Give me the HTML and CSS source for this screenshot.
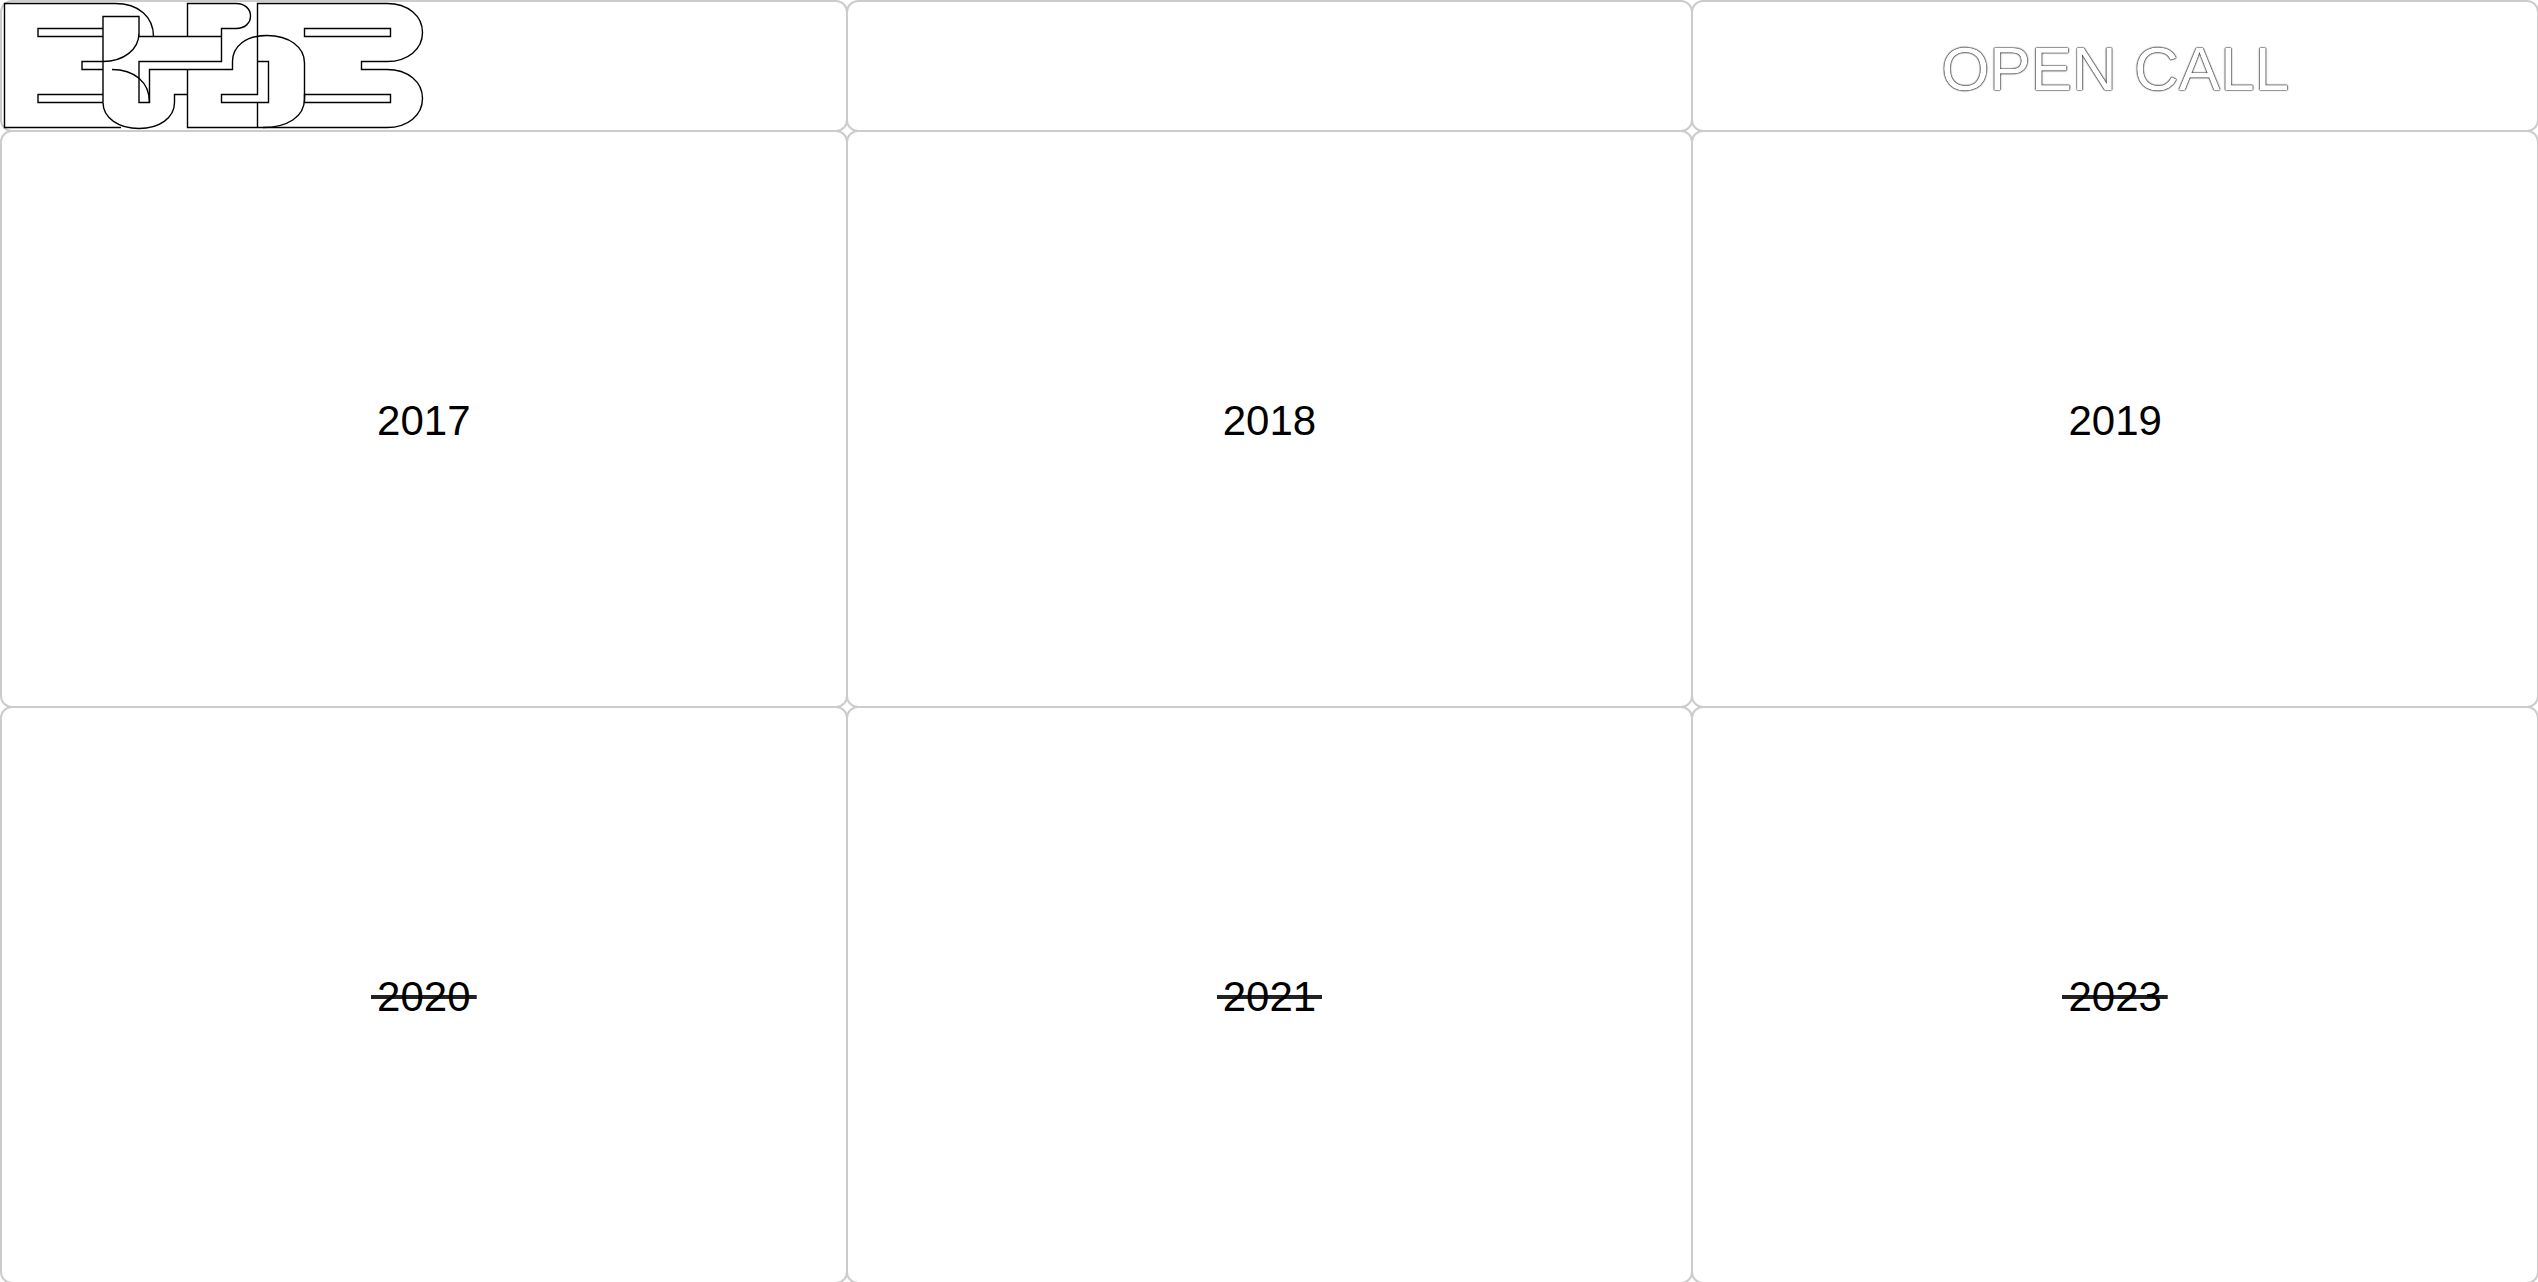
FILE: index.html
```html
<!DOCTYPE html>
<html lang="en">
<head>
<meta charset="utf-8">
<title>Open Call</title>
<link rel="stylesheet" href="styles.css">
</head>
<body>
<header class="header">
  <div class="cell cell-logo">
    <a class="logo-link" href="#" aria-label="Home">
      <svg class="logo" viewBox="1 1 424 128" fill="none" stroke="#000" stroke-width="1.4" aria-hidden="true">
        <path d="M120 126.5H3.500V2.500H114C138 2.500 152.500 16 152.500 35.500"/>
        <path d="M102 27.500H37V35.500H102M102 60.500H81V68.500H102M102 93.500H37V101.500H102"/>
        <path d="M102 101.500V15.500H138V35.500H220.500M138 32C138 49 122 60.500 102 60.500"/>
        <path d="M102 101.500C102 117 118 127.500 138 127.500C158 127.500 173.500 117 173.500 101.500V93.500H186.500"/>
        <path d="M111 68.500C133 68.500 148.500 81 148.500 101.500"/>
        <path d="M186.500 35.500V2.500H235C244 2.500 249.500 8 249.500 15C249.500 22 244 27.500 235 27.500H220.500V60.500H138V101.500H148.500V68.500H231.500V60.500C231.500 45 245 34.500 266 34.500C288 34.500 303.500 46 303.500 62V98C303.500 116 286 126.500 262 126.500"/>
        <path d="M186.500 68.500V126.500H386C407 126.500 421.500 114 421.500 97.500C421.500 81 407 68.500 386 68.500H360.500V60.500H386C407 60.500 421.500 48 421.500 31.500C421.500 15 407 2.500 386 2.500H256.500V93.500H220.500V101.500H267.500V60.500H256.500M256.500 101.500V126.500"/>
        <path d="M303.500 27.500H389.500V35.500H303.500ZM303.500 93.500H389.500V101.500H303.500Z"/>
      </svg>
    </a>
  </div>
  <div class="cell"></div>
  <div class="cell cell-call"><a class="open-call" href="#">OPEN CALL</a></div>
</header>
<main class="years">
  <a class="cell year" href="#">2017</a>
  <a class="cell year" href="#">2018</a>
  <a class="cell year" href="#">2019</a>
  <a class="cell year" href="#"><span class="closed">2020</span></a>
  <a class="cell year" href="#"><span class="closed">2021</span></a>
  <a class="cell year" href="#"><span class="closed">2023</span></a>
</main>
</body>
</html>
```
FILE: styles.css
```css
* {
  box-sizing: border-box;
}

body {
  margin: 0;
  height: 100vh;
  min-height: 480px;
  display: flex;
  flex-direction: column;
  overflow: hidden;
  background: #fff;
  color: #000;
  font-family: "Liberation Sans", Arial, sans-serif;
}

a {
  color: inherit;
  text-decoration: none;
}

/* Neighbouring cells share one 2px line */
.header,
.years {
  display: grid;
  grid-template-columns: repeat(3, 1fr);
  padding-right: 1px;
}

.years {
  flex: 1;
  grid-auto-rows: 1fr;
  margin-top: -2px;
}

.cell {
  display: flex;
  align-items: center;
  justify-content: center;
  margin-right: -2px;
  border: 2px solid #ccc;
  border-radius: 12px;
}

.cell-logo {
  justify-content: flex-start;
}

.logo-link,
.logo {
  display: block;
}

.logo {
  width: 424px;
  height: 128px;
}

.cell-call {
  padding-top: 6px;
}

.open-call {
  color: #fff;
  font-size: 62px;
  line-height: 72px;
  text-shadow: 0 0 1px #000, 0 0 1px #000, 0 0 2px #000;
}

.year {
  margin-bottom: -2px;
  padding-top: 4px;
  font-size: 42px;
  line-height: 48px;
}

.closed {
  padding: 0 6px;
  background: linear-gradient(#222, #222) center / 100% 4px no-repeat;
}
```
